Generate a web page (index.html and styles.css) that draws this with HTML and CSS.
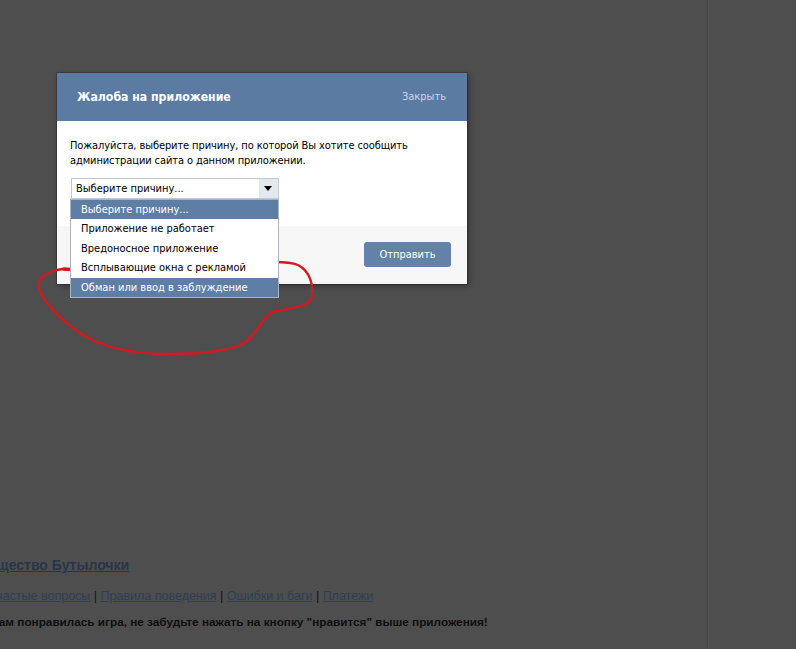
FILE: index.html
```html
<!DOCTYPE html>
<html lang="ru">
<head>
    <meta charset="UTF-8">
    <title>Жалоба на приложение</title>
    <link rel="stylesheet" href="styles.css">
</head>
<body>
    <div class="page">
        <div class="main">
            <div class="app-info">
                <a class="app-title" href="#">Сообщество Бутылочки</a>
                <p class="app-links">
                    <a href="#">Самые частые вопросы</a> | <a href="#">Правила поведения</a> | <a href="#">Ошибки и баги</a> | <a href="#">Платежи</a>
                </p>
                <p class="app-like">Если Вам понравилась игра, не забудьте нажать на кнопку "нравится" выше приложения!</p>
            </div>
        </div>
        <div class="side"></div>
    </div>

    <div class="dialog">
        <div class="dialog-head">
            <span class="dialog-title">Жалоба на приложение</span>
            <a class="dialog-close" href="#">Закрыть</a>
        </div>
        <div class="dialog-body">
            <p>Пожалуйста, выберите причину, по которой Вы хотите сообщить администрации сайта о данном приложении.</p>
            <div class="select">
                <div class="select-value">
                    <span>Выберите причину...</span>
                    <span class="select-arrow"></span>
                </div>
                <ul class="select-list">
                    <li class="active">Выберите причину...</li>
                    <li>Приложение не работает</li>
                    <li>Вредоносное приложение</li>
                    <li>Всплывающие окна с рекламой</li>
                    <li class="active">Обман или ввод в заблуждение</li>
                </ul>
            </div>
        </div>
        <div class="dialog-foot">
            <button class="btn">Отправить</button>
        </div>
    </div>

    <svg class="scribble" width="796" height="649" viewBox="0 0 796 649">
        <path d="M63 269 C 90 271, 110 273, 135 273 C 170 273, 200 269, 243 264 C 262 262, 285 260, 298 265 C 310 271, 314 286, 312 297 C 310 307, 290 308, 272 312 C 262 319, 258 331, 246 342 C 232 351, 200 354, 165 354 C 130 354, 100 346, 80 333 C 58 318, 42 300, 39 288 C 37 278, 46 271, 63 269"
              fill="none" stroke="#d11a1e" stroke-width="2.4" stroke-linecap="round"/>
        <path d="M64 269 L 77 270" stroke="#d11a1e" stroke-width="3.5" stroke-linecap="round"/>
    </svg>
</body>
</html>
```

FILE: styles.css
```css
* {
    margin: 0;
    padding: 0;
    box-sizing: border-box;
}
body {
    background: #4e4e4e;
    font-family: 'DejaVu Sans Condensed', 'DejaVu Sans', sans-serif;
    font-size: 11px;
    overflow: hidden;
    height: 649px;
}
.page {
    display: flex;
    height: 649px;
}
.main {
    width: 708px;
    display: flex;
    flex-direction: column;
    justify-content: flex-end;
    border-right: 1px solid #444;
}
.side {
    flex: 1;
    border-left: 1px solid #555;
}
.app-info {
    margin-left: -39px;
    padding-bottom: 21px;
    font-family: 'Liberation Sans', Arial, sans-serif;
}
.app-title {
    display: block;
    font-size: 14px;
    font-weight: bold;
    color: #26364c;
    margin-bottom: 16px;
}
.app-links {
    font-size: 12.5px;
    color: #111;
    margin-bottom: 12px;
    margin-left: -9px;
}
.app-links a {
    color: #2e3f56;
}
.app-like {
    font-size: 11.75px;
    font-weight: bold;
    color: #0e0e0e;
    margin-left: -3px;
}

.dialog {
    position: absolute;
    left: 57px;
    top: 73px;
    width: 410px;
    background: #fff;
    box-shadow: 0 0 0 1px rgba(0, 0, 0, 0.2), 2px 2px 6px rgba(0, 0, 0, 0.35);
}
.dialog-head {
    height: 48px;
    background: #5b7ba3;
    display: flex;
    align-items: center;
    justify-content: space-between;
    padding: 0 21px 1px 20px;
}
.dialog-title {
    color: #fff;
    font-weight: bold;
    font-size: 12.2px;
}
.dialog-close {
    color: #c9d5e4;
    text-decoration: none;
}
.dialog-body {
    padding: 17px 13px 27px;
    height: 105px;
    color: #000;
    line-height: 15px;
    letter-spacing: -0.1px;
}
.select {
    position: relative;
    width: 208px;
    margin-top: 10px;
    margin-left: 1px;
    letter-spacing: 0;
}
.select-value {
    height: 21px;
    border: 1px solid #c0cad5;
    display: flex;
    align-items: center;
    justify-content: space-between;
    padding-left: 4px;
    background: #fff;
}
.select-arrow {
    width: 19px;
    height: 19px;
    background: #e3e8ee;
    position: relative;
}
.select-arrow::after {
    content: "";
    position: absolute;
    left: 5px;
    top: 7px;
    border-left: 4px solid transparent;
    border-right: 4px solid transparent;
    border-top: 5px solid #000;
}
.select-list {
    position: absolute;
    left: -1px;
    top: 21px;
    width: 209px;
    list-style: none;
    background: #fff;
    border: 1px solid #a9b4c0;
    z-index: 2;
}
.select-list li {
    height: 19.4px;
    line-height: 19px;
    padding-left: 10px;
    color: #000;
}
.select-list li.active {
    background: #5e7ea6;
    color: #fff;
}
.dialog-foot {
    background: #f7f7f7;
    height: 58px;
    display: flex;
    justify-content: flex-end;
    padding: 16px 16px 0 0;
}
.btn {
    width: 87px;
    height: 25px;
    background: #6282a8;
    color: #fff;
    border: none;
    border-radius: 3px;
    font-family: 'DejaVu Sans Condensed', 'DejaVu Sans', sans-serif;
    font-size: 11px;
}
.scribble {
    position: absolute;
    left: 0;
    top: 0;
    pointer-events: none;
}
```
